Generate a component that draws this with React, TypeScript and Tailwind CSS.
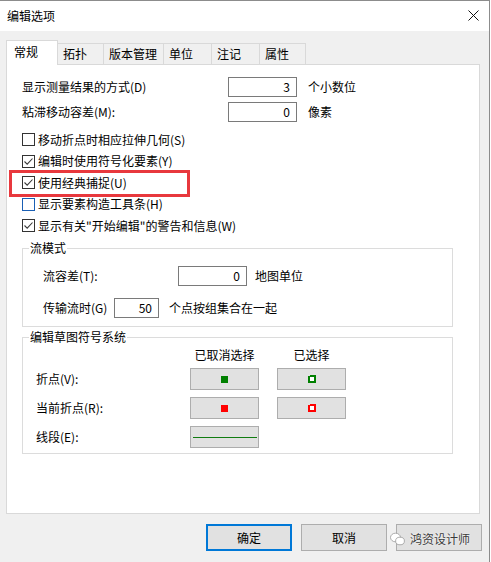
import React from "react";

function Box({ checked, focus }: { checked?: boolean; focus?: boolean }) {
  return (
    <span
      className={`flex h-[13px] w-[13px] shrink-0 items-center justify-center border bg-white ${
        focus ? "border-[#1a5fb4]" : "border-[#333333]"
      }`}
    >
      {checked && (
        <svg width="11" height="11" viewBox="0 0 11 11">
          <path d="M1.5 5.5 L4.2 8.2 L9.5 2.5" stroke="#3a3a3a" strokeWidth="1.1" fill="none" />
        </svg>
      )}
    </span>
  );
}

function Field({ value, w }: { value: string; w: string }) {
  return (
    <div className={`flex h-[20px] items-center justify-end border border-[#7a7a7a] bg-white pr-[6px] ${w}`}>
      {value}
    </div>
  );
}

function SymbolBtn({ children }: { children?: React.ReactNode }) {
  return (
    <div className="flex h-[22px] w-[69px] items-center justify-center border border-[#adadad] bg-[#e1e1e1]">
      {children}
    </div>
  );
}

function Solid({ color }: { color: string }) {
  return (
    <svg width="7" height="7" viewBox="0 0 7 7">
      <rect width="7" height="7" fill={color} />
    </svg>
  );
}

function Hollow({ color }: { color: string }) {
  return (
    <svg width="8" height="8" viewBox="0 0 8 8">
      <path d="M0 1H2V0H8V8H0Z" fill={color} />
      <rect x="2" y="2" width="4" height="4" fill="#fff" />
    </svg>
  );
}

const checks = [
  { label: "移动折点时相应拉伸几何(S)", checked: false },
  { label: "编辑时使用符号化要素(Y)", checked: true },
  { label: "使用经典捕捉(U)", checked: true },
  { label: "显示要素构造工具条(H)", checked: false, focus: true },
  { label: '显示有关"开始编辑"的警告和信息(W)', checked: true },
];

const tabs = [
  { label: "拓扑", w: "w-[46px]" },
  { label: "版本管理", w: "w-[60px]" },
  { label: "单位", w: "w-[48px]" },
  { label: "注记", w: "w-[48px]" },
  { label: "属性", w: "w-[46px]" },
];

export default function App() {
  return (
    <div className="h-[562px] w-[491px] bg-white font-['Noto_Sans_CJK_SC',sans-serif] text-[12px] leading-[16px] text-black">
      <div className="flex h-[562px] w-[490px] flex-col border-r border-t border-[#8c8c8c] bg-[#f0f0f0]">
        {/* title bar */}
        <div className="flex h-[30px] items-center justify-between bg-white pl-[7px] pr-[10px]">
          <span>编辑选项</span>
          <svg width="11" height="11" viewBox="0 0 11 11" className="mb-px">
            <path d="M0.5 0.5 L10.5 10.5 M10.5 0.5 L0.5 10.5" stroke="#111" strokeWidth="1" />
          </svg>
        </div>

        {/* tabs */}
        <div className="mt-[9px] flex h-[24px] items-end pl-[6px]">
          <div className="relative z-10 -mb-px flex h-[25px] w-[52px] items-center border border-b-0 border-[#d9d9d9] bg-white pb-[2px] pl-[7px]">
            常规
          </div>
          {tabs.map((t) => (
            <div
              key={t.label}
              className={`flex h-[21px] items-center border-r border-t border-[#d9d9d9] bg-[#f0f0f0] pl-[5px] ${t.w}`}
            >
              {t.label}
            </div>
          ))}
        </div>

        {/* panel */}
        <div className="relative ml-[6px] h-[450px] w-[474px] border border-[#d9d9d9] bg-white pl-[15px] pt-[12px]">
          <div className="flex h-[20px] items-center">
            <span className="w-[206px]">显示测量结果的方式(D)</span>
            <Field value="3" w="w-[69px]" />
            <span className="ml-[11px]">个小数位</span>
          </div>
          <div className="mt-[5px] flex h-[20px] items-center">
            <span className="w-[206px]">粘滞移动容差(M):</span>
            <Field value="0" w="w-[69px]" />
            <span className="ml-[11px]">像素</span>
          </div>

          <div className="mt-[7px] flex flex-col">
            {checks.map((c) => (
              <div key={c.label} className="flex h-[21.5px] items-center gap-[3px]">
                <Box checked={c.checked} focus={c.focus} />
                <span>{c.label}</span>
              </div>
            ))}
          </div>

          <fieldset className="mt-[3.5px] w-[431px] border border-[#dcdcdc] pb-[8px] pl-[20px]">
            <legend className="ml-[-14px] px-[1px] leading-[16px]">流模式</legend>
            <div className="mt-[10px] flex h-[20px] items-center">
              <span className="w-[135px]">流容差(T):</span>
              <Field value="0" w="w-[69px]" />
              <span className="ml-[8px]">地图单位</span>
            </div>
            <div className="mt-[12px] flex h-[20px] items-center">
              <span className="w-[71px]">传输流时(G)</span>
              <Field value="50" w="w-[45px]" />
              <span className="ml-[10px]">个点按组集合在一起</span>
            </div>
          </fieldset>

          <fieldset className="mt-[2px] w-[431px] border border-[#dcdcdc] pb-[5px] pl-[13px]">
            <legend className="ml-[-7px] px-[1px] leading-[16px]">编辑草图符号系统</legend>
            <div className="mt-[2px] grid grid-cols-[136px_69px_69px] items-center gap-x-[18px]">
              <span className="h-[16px]" />
              <span className="text-center">已取消选择</span>
              <span className="text-center">已选择</span>

              <span className="mt-[5px]">折点(V):</span>
              <div className="mt-[5px]">
                <SymbolBtn>
                  <Solid color="#008000" />
                </SymbolBtn>
              </div>
              <div className="mt-[5px]">
                <SymbolBtn>
                  <Hollow color="#008000" />
                </SymbolBtn>
              </div>

              <span className="mt-[7px]">当前折点(R):</span>
              <div className="mt-[7px]">
                <SymbolBtn>
                  <Solid color="#ff0000" />
                </SymbolBtn>
              </div>
              <div className="mt-[7px]">
                <SymbolBtn>
                  <Hollow color="#ff0000" />
                </SymbolBtn>
              </div>

              <span className="mt-[7px]">线段(E):</span>
              <div className="mt-[7px]">
                <SymbolBtn>
                  <div className="h-px w-[64px] bg-[#107c10]" />
                </SymbolBtn>
              </div>
              <span />
            </div>
          </fieldset>

          {/* highlight */}
          <div className="absolute left-[2px] top-[105px] h-[27px] w-[181px] border-[3px] border-[#e8383d]" />
        </div>

        {/* buttons */}
        <div className="mt-[10px] flex justify-end gap-[9px] pr-[7px]">
          <div className="flex h-[27px] w-[86px] items-center justify-center border-2 border-[#0078d7] bg-[#e1e1e1]">
            确定
          </div>
          <div className="flex h-[27px] w-[86px] items-center justify-center border border-[#adadad] bg-[#e1e1e1]">
            取消
          </div>
          <div className="relative flex h-[27px] w-[86px] items-center justify-center border border-[#adadad] bg-[#e1e1e1]">
            <div className="absolute left-[-7px] top-[6px] flex items-center gap-[5px]">
              <svg width="15" height="14" viewBox="0 0 15 14">
                <ellipse cx="5.5" cy="5.5" rx="5" ry="4.3" fill="#fff" stroke="#9a9a9a" strokeWidth="0.8" />
                <ellipse cx="10" cy="9" rx="4.4" ry="3.8" fill="#fff" stroke="#9a9a9a" strokeWidth="0.8" />
              </svg>
              <span className="text-[#3a3a3a] [text-shadow:0_0_2px_#fff]">鸿资设计师</span>
            </div>
          </div>
        </div>
      </div>
    </div>
  );
}
